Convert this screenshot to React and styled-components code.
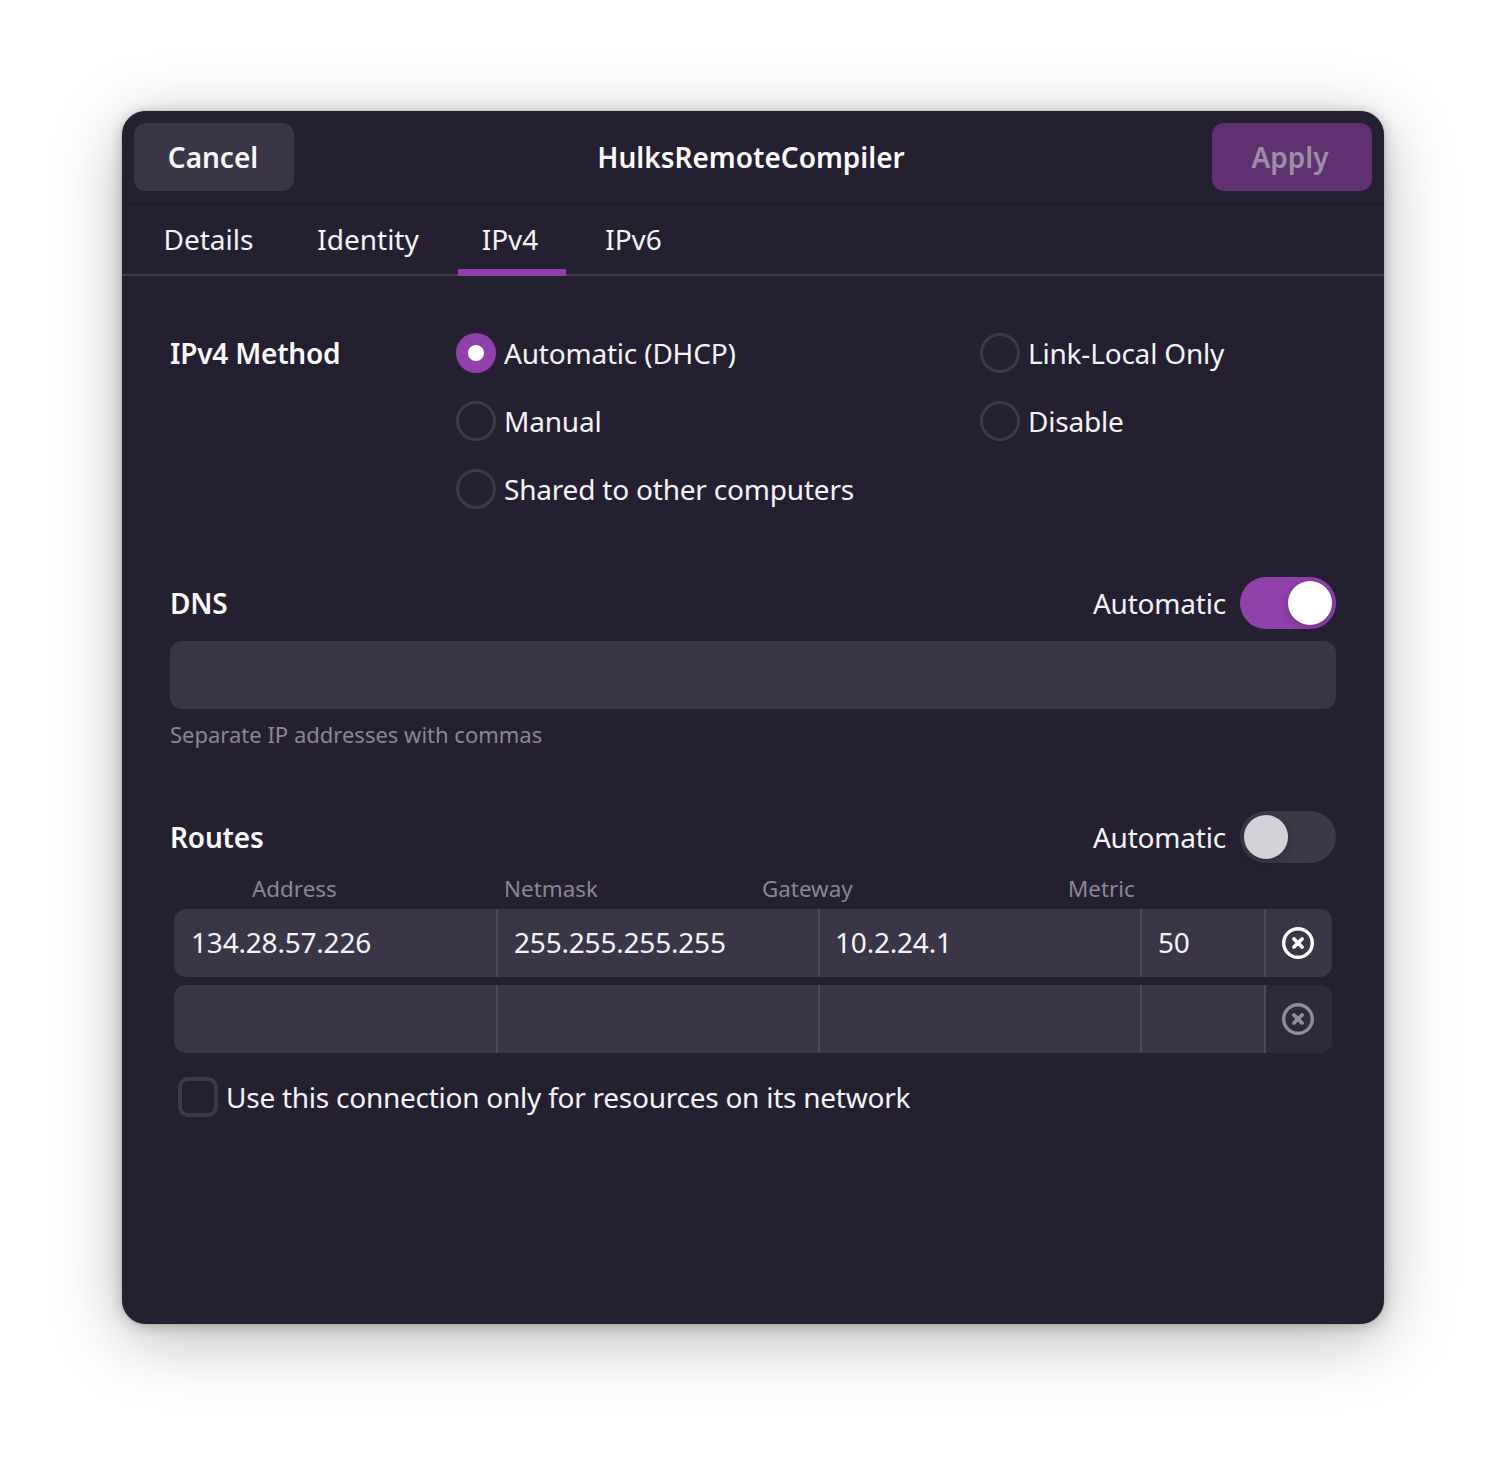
import styled, { createGlobalStyle } from 'styled-components';

const Global = createGlobalStyle`
 html, body {
  margin: 0;
  padding: 0;
  background: #fff;
 }
`;

const Page = styled.div`
 width: 1506px;
 height: 1458px;
 padding: 111px 122px 0;
 box-sizing: border-box;
 overflow: hidden;
 font-family: 'Noto Sans', sans-serif;
 font-size: 28px;
 letter-spacing: -0.2px;
 line-height: 38px;
 color: #f4f4f6;
`;

const Window = styled.div`
 width: 1262px;
 height: 1213px;
 display: flex;
 flex-direction: column;
 background: #242032;
 border-radius: 24px;
 box-shadow: 0 0 1px rgba(60, 58, 70, 0.8), 0 2px 14px rgba(0, 0, 0, 0.24),
  0 14px 70px rgba(0, 0, 0, 0.28);
`;

const Header = styled.header`
 height: 94px;
 box-sizing: border-box;
 display: flex;
 align-items: flex-start;
 justify-content: space-between;
 padding: 12px 12px 0;
 border-bottom: 3px solid #211d2d;
`;

const HeaderButton = styled.button`
 width: 160px;
 height: 68px;
 border: 0;
 border-radius: 12px;
 padding: 0 ${(p) => (p.$primary ? 4 : 2)}px 0 0;
 font: inherit;
 letter-spacing: 0;
 font-weight: 600;
 color: ${(p) => (p.$primary ? '#9c8ea3' : '#f6f6f8')};
 background: ${(p) => (p.$primary ? '#5f3170' : '#3a3647')};
`;

const Title = styled.h1`
 margin: 0;
 padding-right: 4px;
 font-size: 28px;
 font-weight: 600;
 letter-spacing: 0;
 line-height: 68px;
 color: #fafafb;
`;

const Tabs = styled.nav`
 height: 71px;
 box-sizing: border-box;
 display: flex;
 gap: 16px;
 padding-left: 17px;
 border-bottom: 2px solid #3f3b4c;
`;

const Tab = styled.div`
 width: ${(p) => p.$width}px;
 height: 71px;
 box-sizing: border-box;
 padding: 4px ${(p) => (p.$active ? 4 : 0)}px 0 0;
 display: flex;
 align-items: center;
 justify-content: center;
 letter-spacing: 0;
 border-bottom: ${(p) => (p.$active ? '7px solid #9141ac' : '7px solid transparent')};
`;

const Content = styled.main`
 padding: 43px 48px 0;
 display: flex;
 flex-direction: column;
`;

const MethodGrid = styled.section`
 display: grid;
 grid-template-columns: 286px 524px 1fr;
 grid-auto-rows: 68px;
 align-items: center;
`;

const SectionTitle = styled.div`
 font-weight: 600;
 color: #fafafb;
`;

const RadioLabel = styled.label`
 display: flex;
 align-items: center;
 gap: 8px;
 grid-column: ${(p) => p.$col};
 grid-row: ${(p) => p.$row};
`;

const RadioMark = styled.span`
 width: 40px;
 height: 40px;
 box-sizing: border-box;
 border-radius: 50%;
 flex: none;
 display: flex;
 align-items: center;
 justify-content: center;
 background: ${(p) => (p.$on ? '#9141ac' : 'transparent')};
 border: ${(p) => (p.$on ? '0' : '3px solid #3d3949')};

 &::after {
  content: '';
  display: ${(p) => (p.$on ? 'block' : 'none')};
  width: 16px;
  height: 16px;
  border-radius: 50%;
  background: #fff;
 }
`;

const SectionHead = styled.div`
 display: flex;
 align-items: center;
 justify-content: space-between;
 margin-top: ${(p) => p.$top}px;
`;

const AutoWrap = styled.div`
 display: flex;
 align-items: center;
 gap: 14px;
`;

const Toggle = styled.span`
 width: 96px;
 height: 52px;
 box-sizing: border-box;
 padding: 4px;
 border-radius: 26px;
 display: flex;
 justify-content: ${(p) => (p.$on ? 'flex-end' : 'flex-start')};
 background: ${(p) => (p.$on ? '#9141ac' : '#3d3949')};
`;

const Knob = styled.span`
 width: 44px;
 height: 44px;
 border-radius: 50%;
 background: ${(p) => (p.$on ? '#ffffff' : '#d3d2d6')};
 box-shadow: 0 2px 8px rgba(0, 0, 0, 0.25);
`;

const Entry = styled.div`
 height: 68px;
 margin-top: 12px;
 border-radius: 12px;
 background: #3a3647;
`;

const Hint = styled.div`
 margin-top: 10px;
 font-size: 22px;
 letter-spacing: 0;
 line-height: 30px;
 color: #8a8695;
`;

const ColumnHeads = styled.div`
 display: flex;
 margin: 13px 0 7px;
 padding-left: 82px;
 font-size: 22.4px;
 letter-spacing: 0;
 line-height: 26px;
 color: #8a8695;
`;

const ColumnHead = styled.span`
 width: ${(p) => p.$width}px;
`;

const RouteRow = styled.div`
 display: flex;
 height: 68px;
 margin: 0 4px 8px;
 border-radius: 12px;
 overflow: hidden;
 background: #3a3647;
`;

const RouteCell = styled.div`
 width: ${(p) => p.$width}px;
 box-sizing: border-box;
 padding: 0 0 2px ${(p) => p.$pad}px;
 display: flex;
 align-items: center;
 border-right: 2px solid #4e4a5a;
`;

const RemoveCell = styled.div`
 flex: 1;
 display: flex;
 align-items: center;
 justify-content: center;
 padding-right: 2px;
 background: ${(p) => (p.$dim ? '#2e2a3b' : 'transparent')};
 color: ${(p) => (p.$dim ? '#8f8d98' : '#ffffff')};
`;

const CheckRow = styled.label`
 display: flex;
 align-items: center;
 gap: 8px;
 margin: 16px 0 0 8px;
 height: 40px;
 letter-spacing: -0.25px;
`;

const CheckMark = styled.span`
 width: 40px;
 height: 40px;
 box-sizing: border-box;
 border: 4px solid #3d3949;
 border-radius: 10px;
`;

const RemoveIcon = () => (
 <svg width='34' height='34' viewBox='0 0 34 34' fill='none' stroke='currentColor'>
  <circle cx='17' cy='17' r='14.3' strokeWidth='3.4' />
  <path d='M13 13 21 21M21 13 13 21' strokeWidth='3.8' strokeLinecap='round' />
 </svg>
);

const Radio = ({ col, row, on, children }) => (
 <RadioLabel $col={col} $row={row}>
  <RadioMark $on={on} />
  {children}
 </RadioLabel>
);

const Automatic = ({ on }) => (
 <AutoWrap>
  Automatic
  <Toggle $on={on}>
   <Knob $on={on} />
  </Toggle>
 </AutoWrap>
);

const Route = ({ values, dim }) => (
 <RouteRow>
  <RouteCell $width={324} $pad={17}>{values[0]}</RouteCell>
  <RouteCell $width={322} $pad={16}>{values[1]}</RouteCell>
  <RouteCell $width={322} $pad={15}>{values[2]}</RouteCell>
  <RouteCell $width={124} $pad={16}>{values[3]}</RouteCell>
  <RemoveCell $dim={dim}>
   <RemoveIcon />
  </RemoveCell>
 </RouteRow>
);

const App = () => {
 return (
  <Page>
   <Global />
   <Window>
    <Header>
     <HeaderButton>Cancel</HeaderButton>
     <Title>HulksRemoteCompiler</Title>
     <HeaderButton $primary>Apply</HeaderButton>
    </Header>
    <Tabs>
     <Tab $width={139}>Details</Tab>
     <Tab $width={148}>Identity</Tab>
     <Tab $width={108} $active>IPv4</Tab>
     <Tab $width={103}>IPv6</Tab>
    </Tabs>
    <Content>
     <MethodGrid>
      <SectionTitle>IPv4 Method</SectionTitle>
      <Radio col={2} row={1} on>Automatic (DHCP)</Radio>
      <Radio col={3} row={1}>Link-Local Only</Radio>
      <Radio col={2} row={2}>Manual</Radio>
      <Radio col={3} row={2}>Disable</Radio>
      <Radio col={2} row={3}>Shared to other computers</Radio>
     </MethodGrid>
     <SectionHead $top={54}>
      <SectionTitle>DNS</SectionTitle>
      <Automatic on />
     </SectionHead>
     <Entry />
     <Hint>Separate IP addresses with commas</Hint>
     <SectionHead $top={62}>
      <SectionTitle>Routes</SectionTitle>
      <Automatic />
     </SectionHead>
     <ColumnHeads>
      <ColumnHead $width={252}>Address</ColumnHead>
      <ColumnHead $width={258}>Netmask</ColumnHead>
      <ColumnHead $width={306}>Gateway</ColumnHead>
      <ColumnHead $width={100}>Metric</ColumnHead>
     </ColumnHeads>
     <Route values={['134.28.57.226', '255.255.255.255', '10.2.24.1', '50']} />
     <Route values={['', '', '', '']} dim />
     <CheckRow>
      <CheckMark />
      Use this connection only for resources on its network
     </CheckRow>
    </Content>
   </Window>
  </Page>
 );
};

export default App;
